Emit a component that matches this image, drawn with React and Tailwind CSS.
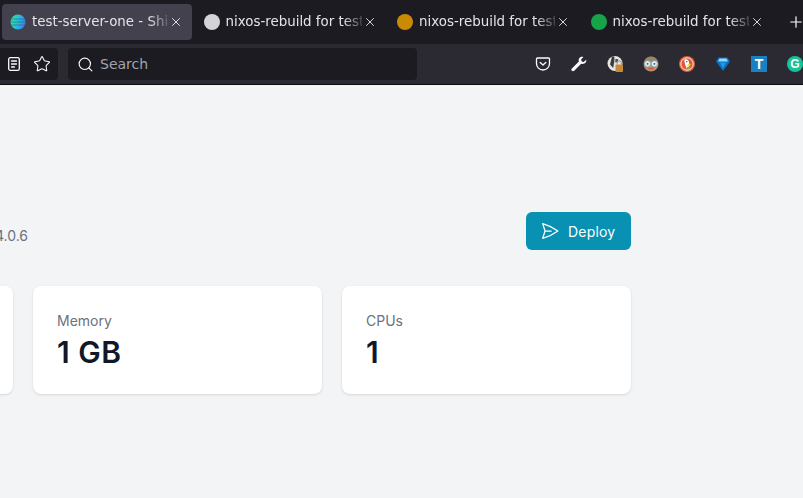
import React from 'react';
import { Search, Star, X, Plus } from 'lucide-react';

const Tab = ({ active, icon, title }) => (
  <div className={`flex h-9 w-[190px] shrink-0 items-center rounded pl-2 pr-2 ${active ? 'bg-[#42414d]' : ''}`}>
    <span className="flex h-4 w-4 shrink-0 items-center justify-center">{icon}</span>
    <span className="ml-[6px] w-[136px] overflow-hidden whitespace-nowrap text-[13.4px] text-[#e4e4e8] [mask-image:linear-gradient(to_right,black_86%,rgba(0,0,0,0.2)_100%)]">
      {title}
    </span>
    <X size={14} strokeWidth={1.5} className="ml-[1px] shrink-0 text-[#f1f1f3]" />
  </div>
);

const Dot = ({ className }) => <span className={`block h-4 w-4 rounded-full ${className}`} />;

const Globe = () => (
  <svg width="16" height="16" viewBox="0 0 16 16">
    <defs>
      <linearGradient id="globeFill" x1="0" y1="0.2" x2="1" y2="0.5">
        <stop offset="0" stopColor="#2ee6a0" />
        <stop offset="0.5" stopColor="#22c3d8" />
        <stop offset="1" stopColor="#3b82f6" />
      </linearGradient>
    </defs>
    <circle cx="8" cy="8" r="7.5" fill="url(#globeFill)" />
    <path d="M1 5h14M.6 8h14.800M1 11h14" stroke="#42414d" strokeWidth="0.8" opacity="0.6" />
  </svg>
);

const Reader = () => (
  <svg width="14" height="16" viewBox="0 0 14 16" fill="none" stroke="#fbfbfe" strokeWidth="1.3" strokeLinecap="round">
    <rect x="1.700" y="1.700" width="10.600" height="12.600" rx="1.600" />
    <path d="M4.500 5h5M4.500 8h5M4.500 11h3" />
  </svg>
);

const PocketIcon = () => (
  <svg width="16" height="16" viewBox="0 0 16 16" fill="none" stroke="#fbfbfe" strokeWidth="1.3" strokeLinecap="round" strokeLinejoin="round">
    <path d="M2.400 2h11.200c.5 0 .9.4.9.9v4.600c0 3.600-2.900 6.500-6.500 6.500s-6.500-2.900-6.500-6.500V2.900c0-.5.4-.9.9-.9z" />
    <path d="M5.200 6.400 8 9l2.800-2.600" />
  </svg>
);

const Wrench = () => (
  <svg width="16" height="16" viewBox="0 0 16 16" fill="#fbfbfe">
    <path d="M15.200 3.700 12.700 6l-2-.6-.6-2L12.400.9C10.700.3 8.900.9 8.100 2.400c-.6 1-.6 2.100-.2 3L.9 12.400c-.7.7-.7 1.700 0 2.400.6.600 1.600.600 2.300 0l7-7c1 .4 2.100.300 3-.2 1.600-.8 2.500-2.400 2-3.900z" />
  </svg>
);

const LockGhost = () => (
  <svg width="17" height="18" viewBox="0 0 17 18">
    <circle cx="8" cy="8.500" r="7.500" fill="#e8e6e3" />
    <path d="M5 1.500h2.400v4.500L6.200 13 3 9.500z" fill="#3a3a3f" />
    <path d="M8.300 4h2.800v3.500H8.300z" fill="#55545a" />
    <rect x="8.500" y="9.500" width="7.500" height="7.500" rx="0.800" fill="#c58a35" />
    <path d="M10.300 9.500V7.800a2 2 0 0 1 4 0v1.700" fill="none" stroke="#a8a29a" strokeWidth="1.200" />
  </svg>
);

const Owl = () => (
  <svg width="16" height="16" viewBox="0 0 16 16">
    <circle cx="8" cy="8" r="7.500" fill="#c08a6e" />
    <path d="M1.500 6C2.500 2.500 5 .8 8 .8s5.500 1.700 6.500 5.200z" fill="#93866a" />
    <circle cx="4.600" cy="7.800" r="3.100" fill="#d7eef5" stroke="#7fa3b0" strokeWidth="0.700" />
    <circle cx="11.400" cy="7.800" r="3.100" fill="#d7eef5" stroke="#7fa3b0" strokeWidth="0.700" />
    <circle cx="4.600" cy="7.800" r="0.900" fill="#3d4b52" />
    <circle cx="11.400" cy="7.800" r="0.900" fill="#3d4b52" />
    <path d="M6 12.500h4" stroke="#cf5a34" strokeWidth="1.300" strokeLinecap="round" />
  </svg>
);

const Duck = () => (
  <svg width="16" height="16" viewBox="0 0 16 16">
    <circle cx="8" cy="8" r="8" fill="#de5833" />
    <circle cx="8" cy="8" r="6.200" fill="none" stroke="#fff" strokeWidth="0.900" />
    <path d="M5.500 3.500C7.500 2.800 9.500 3.500 10 6c.3 1.500.1 3.500.2 6.500H7.400C7 9.500 4.800 6.500 5.500 3.500z" fill="#fff" />
    <path d="M8.500 8.500 11.500 7.800v1.700L8.500 10z" fill="#fdd20a" />
    <path d="M7.800 11 10.500 10.500v2l-2.500.5z" fill="#65bc46" />
    <circle cx="7.800" cy="5.800" r="0.700" fill="#2d4f8e" />
  </svg>
);

const Gem = () => (
  <svg width="16" height="16" viewBox="0 0 16 16">
    <path d="M3.500 1.500h9L15 5.500 8 15 1 5.500z" fill="#0c6fc4" />
    <path d="M4.500 2.500h7L13 5.500H3z" fill="#8fdcf8" />
    <path d="M5 6.500h6L8 12.500z" fill="#1d9be6" />
  </svg>
);

const Slot = ({ children }) => <span className="flex h-8 w-9 shrink-0 items-center justify-center">{children}</span>;

export default function App() {
  return (
    <div className="flex h-[498px] w-[803px] flex-col overflow-hidden bg-[#f3f4f6] font-['Inter',sans-serif]">
      {/* browser tabs */}
      <div className="flex h-11 shrink-0 items-center gap-[3.5px] bg-[#1c1b22] pl-[2px] font-['DejaVu_Sans',sans-serif]">
        <Tab active icon={<Globe />} title="test-server-one - Shipyard" />
        <Tab icon={<Dot className="bg-[#d4d4d8]" />} title="nixos-rebuild for test-server-one" />
        <Tab icon={<Dot className="bg-[#ca8a04]" />} title="nixos-rebuild for test-server-one" />
        <Tab icon={<Dot className="bg-[#16a34a]" />} title="nixos-rebuild for test-server-one" />
        <Plus size={18} strokeWidth={1.6} className="ml-[11px] shrink-0 text-[#fbfbfe]" />
      </div>

      {/* toolbar */}
      <div className="flex h-[41px] shrink-0 items-start border-b border-[#0c0c0d] bg-[#2b2a33] pt-1 font-['DejaVu_Sans',sans-serif]">
        <div className="flex h-8 w-[58px] shrink-0 items-center gap-3 rounded-r bg-[#1c1b22] pl-[7px]">
          <Reader />
          <Star size={18} strokeWidth={1.4} className="text-[#fbfbfe]" />
        </div>
        <div className="ml-[10px] flex h-8 w-[349px] shrink-0 items-center rounded bg-[#1c1b22] pl-[9px]">
          <Search size={17} strokeWidth={1.6} className="text-[#fbfbfe]" />
          <span className="ml-[6px] text-sm text-[#a3a3ad]">Search</span>
        </div>
        <div className="ml-[108px] flex h-8 shrink-0 items-center">
          <Slot><PocketIcon /></Slot>
          <Slot><Wrench /></Slot>
          <Slot><LockGhost /></Slot>
          <Slot><Owl /></Slot>
          <Slot><Duck /></Slot>
          <Slot><Gem /></Slot>
          <Slot>
            <span className="flex h-4 w-4 items-center justify-center bg-[#1b80c2] font-['Liberation_Sans',sans-serif] text-[14px] font-bold leading-none text-white">T</span>
          </Slot>
          <Slot>
            <span className="flex h-4 w-4 items-center justify-center rounded-full bg-[#15c39a] font-['Liberation_Sans',sans-serif] text-[12px] font-bold leading-none text-white">G</span>
          </Slot>
        </div>
      </div>

      {/* page */}
      <div className="ml-[-276px] w-[907px] pt-[127px]">
        <div className="flex h-[38px] items-center justify-between">
          <p className="w-[304px] pt-[10px] text-right text-sm leading-5 text-[#6b7280]">4.0.6</p>
          <button className="flex h-[38px] w-[105px] items-center rounded-md bg-[#0891b2] pl-[14px] text-sm font-normal text-white">
            <svg width="20" height="20" viewBox="0 0 24 24" fill="none" stroke="currentColor" strokeWidth="1.5" strokeLinecap="round" strokeLinejoin="round">
              <path d="M6 12 3.269 3.126A59.768 59.768 0 0 1 21.485 12 59.77 59.77 0 0 1 3.270 20.876L5.999 12zm0 0h7.500" />
            </svg>
            <span className="ml-2 pt-px tracking-[0.2px]">Deploy</span>
          </button>
        </div>
        <div className="mt-9 grid grid-cols-3 gap-5">
          {[['', ''], ['Memory', '1 GB'], ['CPUs', '1']].map(([label, value], i) => (
            <div key={i} className="h-[108px] rounded-lg bg-white px-6 pt-[25px] shadow">
              <p className="h-5 text-sm leading-5 text-[#6b7280]">{label}</p>
              <p className="mt-[3px] text-3xl font-semibold leading-9 tracking-[0.5px] text-[#111827]">{value}</p>
            </div>
          ))}
        </div>
      </div>
    </div>
  );
}
